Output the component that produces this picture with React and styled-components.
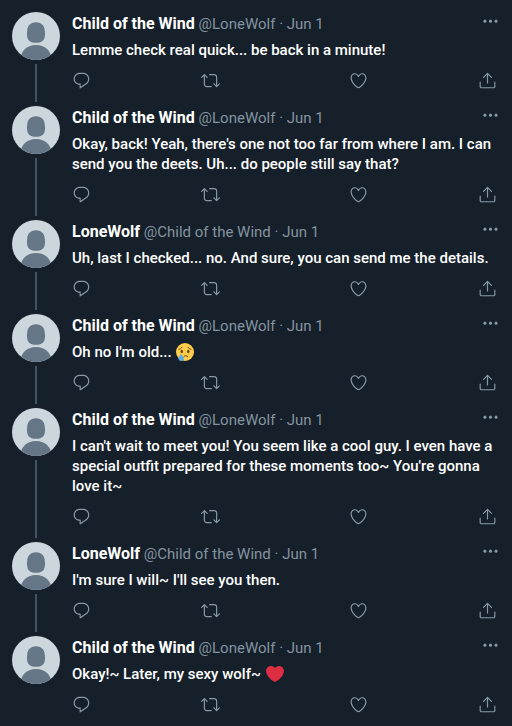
import styled, { createGlobalStyle } from "styled-components";

const wind = { name: "Child of the Wind", handle: "@LoneWolf" };
const wolf = { name: "LoneWolf", handle: "@Child of the Wind" };

const tweets = [
  { author: wind, text: "Lemme check real quick... be back in a minute!" },
  {
    author: wind,
    text: "Okay, back! Yeah, there's one not too far from where I am. I can send you the deets. Uh... do people still say that?",
  },
  {
    author: wolf,
    text: "Uh, last I checked... no. And sure, you can send me the details.",
  },
  { author: wind, text: "Oh no I'm old... ", emoji: "cry" },
  {
    author: wind,
    text: "I can't wait to meet you! You seem like a cool guy. I even have a special outfit prepared for these moments too~ You're gonna love it~",
  },
  { author: wolf, text: "I'm sure I will~ I'll see you then." },
  { author: wind, text: "Okay!~ Later, my sexy wolf~ ", emoji: "heart" },
];

const actions = [
  {
    label: "Reply",
    path: "M14.046 2.242l-4.148-.01h-.002c-4.374 0-7.8 3.427-7.8 7.802 0 4.098 3.186 7.206 7.465 7.37v3.828c0 .108.044.286.12.403.142.225.384.347.632.347.138 0 .277-.038.402-.118.264-.168 6.473-4.14 8.088-5.506 1.902-1.61 3.04-3.97 3.043-6.312v-.017c-.006-4.367-3.43-7.787-7.8-7.788zm3.787 12.972c-1.134.96-4.862 3.405-6.772 4.643V16.67c0-.414-.335-.75-.75-.75h-.396c-3.66 0-6.318-2.476-6.318-5.886 0-3.534 2.768-6.302 6.3-6.302l4.147.01h.002c3.532 0 6.3 2.766 6.302 6.296-.003 1.91-.942 3.844-2.514 5.176z",
  },
  {
    label: "Retweet",
    path: "M23.77 15.67c-.292-.293-.767-.293-1.06 0l-2.22 2.22V7.65c0-2.068-1.683-3.75-3.75-3.75h-5.85c-.414 0-.75.336-.75.75s.336.75.75.75h5.85c1.24 0 2.25 1.01 2.25 2.25v10.24l-2.22-2.22c-.293-.293-.768-.293-1.06 0s-.294.768 0 1.06l3.5 3.5c.145.147.337.22.53.22s.383-.072.53-.22l3.5-3.5c.294-.292.294-.767 0-1.06zm-10.66 3.28H7.26c-1.24 0-2.25-1.01-2.25-2.25V6.46l2.22 2.22c.148.147.34.22.532.22s.384-.073.53-.22c.293-.293.293-.768 0-1.06l-3.5-3.5c-.293-.294-.768-.294-1.06 0l-3.5 3.5c-.294.292-.294.767 0 1.06s.767.293 1.06 0l2.22-2.22V16.7c0 2.068 1.683 3.75 3.75 3.75h5.85c.414 0 .75-.336.75-.75s-.337-.75-.75-.75z",
  },
  {
    label: "Like",
    path: "M12 21.638h-.014C9.403 21.59 1.95 14.856 1.95 8.478c0-3.064 2.525-5.754 5.403-5.754 2.29 0 3.83 1.58 4.646 2.73.814-1.148 2.354-2.73 4.645-2.73 2.88 0 5.404 2.69 5.404 5.755 0 6.376-7.454 13.11-10.037 13.157H12zM7.354 4.225c-2.08 0-3.903 1.988-3.903 4.255 0 5.74 7.034 11.596 8.55 11.658 1.518-.062 8.55-5.917 8.55-11.658 0-2.267-1.823-4.255-3.903-4.255-2.528 0-3.94 2.936-3.952 2.965-.23.562-1.156.562-1.387 0-.014-.03-1.425-2.965-3.954-2.965z",
  },
  {
    label: "Share",
    path: "M17.53 7.47l-5-5c-.293-.293-.768-.293-1.06 0l-5 5c-.294.293-.294.768 0 1.06s.767.294 1.06 0l3.72-3.72V15c0 .414.336.75.75.75s.75-.336.75-.75V4.81l3.72 3.72c.146.147.338.22.53.22s.384-.072.53-.22c.293-.293.293-.767 0-1.06zM19.708 21.944H4.292C3.028 21.944 2 20.916 2 19.652V14c0-.414.336-.75.75-.75s.75.336.75.75v5.652c0 .437.355.792.792.792h15.416c.437 0 .792-.355.792-.792V14c0-.414.336-.75.75-.75s.75.336.75.75v5.652c0 1.264-1.028 2.292-2.292 2.292z",
  },
];

function DefaultAvatar() {
  return (
    <Avatar viewBox="0 0 48 48" role="img" aria-label="Profile picture">
      <clipPath id="round">
        <circle cx="24" cy="24" r="24" />
      </clipPath>
      <g clipPath="url(#round)">
        <rect width="48" height="48" fill="#ccd6dd" />
        <path
          d="M24 10.300c-5.600 0-8.700 3.500-8.800 8.700 0 1.200-.3 1.800-.3 3 0 1.200.3 2 .4 3 .5 3.800 3.500 5.800 8.700 5.800s8.200-2 8.700-5.800c.1-1 .4-1.800.4-3 0-1.200-.3-1.800-.3-3-.1-5.200-3.200-8.700-8.800-8.700z"
          fill="#657786"
        />
        <path
          d="M8 48c1-8.500 6-14.900 16-14.900S39 39.500 40 48z"
          fill="#657786"
        />
      </g>
    </Avatar>
  );
}

function Emoji({ name }) {
  if (name === "heart") {
    return (
      <EmojiImage viewBox="0 0 36 36" role="img" aria-label="Red heart">
        <path
          fill="#dd2e44"
          d="M35.885 11.833c0-5.45-4.418-9.868-9.867-9.868-3.308 0-6.227 1.633-8.018 4.129-1.791-2.496-4.71-4.129-8.017-4.129-5.45 0-9.868 4.417-9.868 9.868 0 .772.098 1.52.266 2.241C1.751 22.587 11.216 31.568 18 34.034c6.783-2.466 16.249-11.447 17.617-19.959.17-.721.268-1.469.268-2.242z"
        />
      </EmojiImage>
    );
  }
  return (
    <EmojiImage viewBox="0 0 36 36" role="img" aria-label="Crying face">
      <circle cx="18" cy="18" r="18" fill="#ffcc4d" />
      <ellipse cx="11.500" cy="17" rx="2.500" ry="3.500" fill="#664500" />
      <ellipse cx="24.500" cy="17" rx="2.500" ry="3.500" fill="#664500" />
      <path
        d="M6 12.500c2.500-.3 4.500-1.500 6-4M30 12.500c-2.500-.3-4.500-1.500-6-4M15.500 27.500c2-3 6-3 8 0"
        fill="none"
        stroke="#664500"
        strokeWidth="2"
        strokeLinecap="round"
      />
      <path
        d="M10 22c3 4.600 6 6.700 6 9.500 0 2.500-2.200 4.500-5.500 4.500S5 34 5 31.500c0-2.800 2-4.900 5-9.500z"
        fill="#5dadec"
      />
    </EmojiImage>
  );
}

function Tweet({ author, text, emoji, threaded }) {
  return (
    <Row>
      <AvatarColumn>
        <DefaultAvatar />
        {threaded && <ThreadLine />}
      </AvatarColumn>
      <Content $threaded={threaded}>
        <Header>
          <Byline>
            <Name href="#">{author.name}</Name> {author.handle} ·{" "}
            <DateLink href="#">Jun 1</DateLink>
          </Byline>
          <IconButton aria-label="More">
            <Icon viewBox="0 0 24 24">
              <circle cx="5" cy="9" r="1.900" />
              <circle cx="12" cy="9" r="1.900" />
              <circle cx="19" cy="9" r="1.900" />
            </Icon>
          </IconButton>
        </Header>
        <Text>
          {text}
          {emoji && <Emoji name={emoji} />}
        </Text>
        <Actions>
          {actions.map(({ label, path }) => (
            <IconButton key={label} aria-label={label}>
              <Icon viewBox="0 0 24 24">
                <path d={path} />
              </Icon>
            </IconButton>
          ))}
        </Actions>
      </Content>
    </Row>
  );
}

export default function App() {
  return (
    <>
      <GlobalStyle />
      <Thread>
        {tweets.map((tweet, index) => (
          <Tweet key={index} {...tweet} threaded={index < tweets.length - 1} />
        ))}
      </Thread>
    </>
  );
}

const GlobalStyle = createGlobalStyle`
  * {
    box-sizing: border-box;
  }

  body {
    margin: 0;
    background: #16202a;
    color: #fff;
    font-family: Roboto, "Liberation Sans", sans-serif;
    font-size: 15px;
    line-height: 20px;
  }
`;

const Thread = styled.main`
  padding: 12px 12px 0;
`;

const Row = styled.article`
  display: flex;
  gap: 12px;
`;

const AvatarColumn = styled.div`
  display: flex;
  flex-direction: column;
  align-items: center;
  gap: 4px;
  flex-shrink: 0;
  padding-bottom: 4px;
`;

const Avatar = styled.svg`
  width: 48px;
  height: 48px;
`;

const ThreadLine = styled.div`
  flex: 1;
  width: 2px;
  background: #3d5466;
`;

const Content = styled.div`
  flex: 1;
  min-width: 0;
  padding: 2px 0 ${(props) => (props.$threaded ? "16px" : "8px")};
`;

const Header = styled.header`
  display: flex;
  justify-content: space-between;
  align-items: flex-start;
  height: 20px;
  margin-bottom: 6px;
`;

const Byline = styled.div`
  min-width: 0;
  overflow: hidden;
  white-space: nowrap;
  text-overflow: ellipsis;
  color: #8493a0;
`;

const Name = styled.a`
  color: #fff;
  font-size: 16px;
  font-weight: 700;
  text-decoration: none;
`;

const DateLink = styled.a`
  color: inherit;
  text-decoration: none;
`;

const Text = styled.p`
  margin: 0 0 11px;
  font-weight: 500;
  overflow-wrap: break-word;
`;

const EmojiImage = styled.svg`
  width: 18px;
  height: 18px;
  margin: 0 1px;
  vertical-align: -4px;
`;

const Actions = styled.div`
  display: grid;
  grid-template-columns: 13fr 15fr 13fr auto;
  justify-items: start;
  max-width: 425px;
`;

const IconButton = styled.button`
  display: flex;
  padding: 0;
  border: 0;
  background: none;
  color: #8899a6;
  cursor: pointer;
`;

const Icon = styled.svg`
  width: 19px;
  height: 19px;
  fill: currentColor;
`;
